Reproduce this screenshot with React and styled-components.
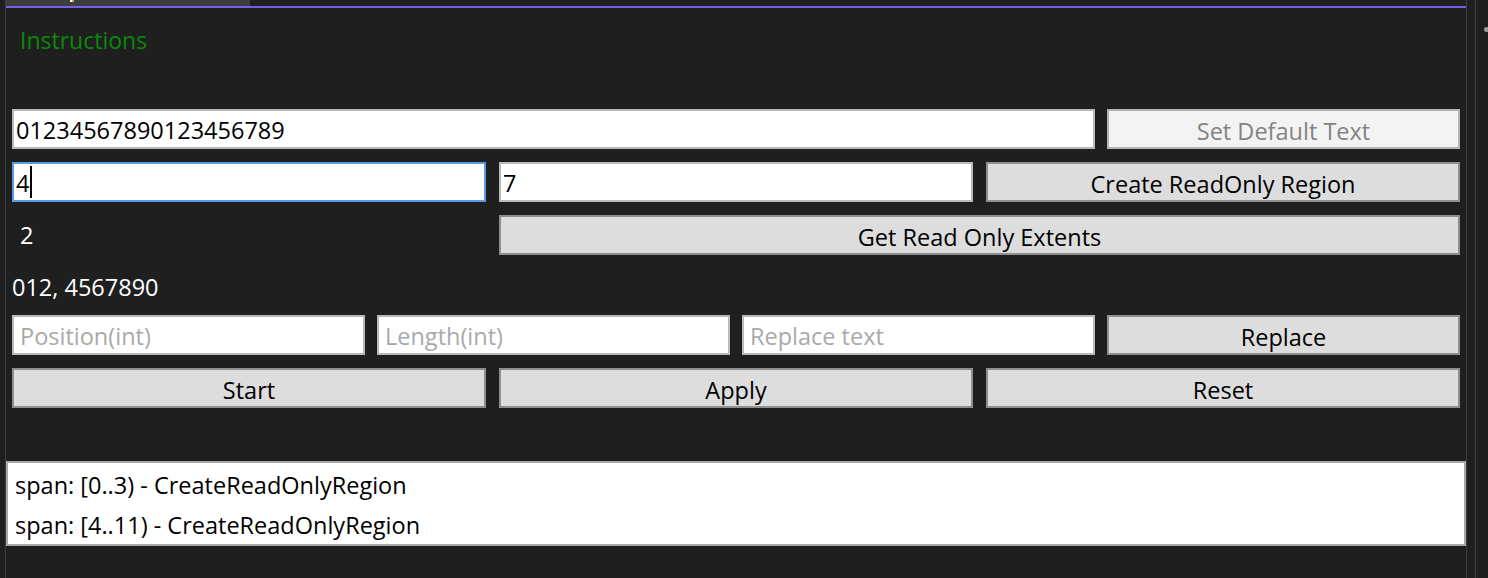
import React from 'react';
import styled, { createGlobalStyle } from 'styled-components';

const GlobalStyle = createGlobalStyle`
  html, body {
    margin: 0;
    padding: 0;
    background: #1f1f1f;
  }
  body {
    font-family: "Open Sans", "Noto Sans", "Liberation Sans", sans-serif;
    font-size: 23.5px;
  }
`;

const Page = styled.div`
  display: flex;
  height: 578px;
  background: #1f1f1f;
  overflow: hidden;
`;

const Gutter = styled.div`
  width: 5px;
  flex: none;
  border-right: 1px solid #3e3e3e;
`;

const Panel = styled.div`
  width: 1460px;
  flex: none;
  display: flex;
  flex-direction: column;
`;

const TabStrip = styled.div`
  height: 6px;
  display: flex;
`;

const Tab = styled.div`
  width: 244px;
  background: #3d3d3d;
  position: relative;
`;

const TabIcon = styled.span`
  position: absolute;
  left: 64px;
  top: 0;
  width: 4px;
  height: 2px;
  background: linear-gradient(90deg, #ffffff 50%, #e8a040 50%);
`;

const Accent = styled.div`
  height: 2px;
  background: #7160e8;
`;

const Heading = styled.div`
  margin: 15px 0 52px 14px;
  line-height: 34px;
  font-size: 23px;
  color: #0a8a0a;
`;

const Form = styled.div`
  display: flex;
  flex-direction: column;
  gap: 13px;
  padding: 0 6px;
`;

const Row = styled.div`
  display: grid;
  grid-template-columns: ${(p) => `repeat(${p.cols}, 1fr)`};
  column-gap: ${(p) => (p.cols === 4 ? '12px' : '13px')};
  height: ${(p) => p.h || 40}px;
`;

const TextBox = styled.div`
  grid-column: ${(p) => p.span || 'auto'};
  box-sizing: border-box;
  height: 40px;
  display: flex;
  align-items: center;
  padding: 2px 2px 0 ${(p) => (p.placeholder ? 6 : 2)}px;
  background: #ffffff;
  border: 2px solid ${(p) => (p.focused ? '#569de5' : '#b9b9b9')};
  color: ${(p) => (p.placeholder ? '#a9a9a9' : '#000000')};
  white-space: nowrap;
  overflow: hidden;
`;

const Caret = styled.span`
  display: inline-block;
  width: 2px;
  height: 32px;
  background: #000;
  margin: -2px 0 0 1px;
`;

const Button = styled.button`
  grid-column: ${(p) => p.span || 'auto'};
  box-sizing: border-box;
  height: 40px;
  margin: 0;
  padding: 3px 0 0;
  font: inherit;
  color: ${(p) => (p.disabled ? '#838383' : '#000000')};
  background: ${(p) => (p.disabled ? '#f3f3f3' : '#dddddd')};
  border: 2px solid ${(p) => (p.disabled ? '#b4b4b4' : '#8f8f8f')};
  border-radius: 0;
`;

const Label = styled.div`
  display: flex;
  align-items: center;
  padding: ${(p) => p.shift || 0}px 0 0 ${(p) => p.indent || 0}px;
  color: #ffffff;
  white-space: nowrap;
`;

const ListBox = styled.div`
  margin-top: 53px;
  height: 85px;
  box-sizing: border-box;
  padding: 2px 0 0 7px;
  background: #ffffff;
  border: 2px solid #a9a9a9;
`;

const ListItem = styled.div`
  height: 40px;
  line-height: 40px;
  color: #000000;
`;

const RightEdge = styled.div`
  flex: 1;
  display: flex;
  border-left: 1px solid #3e3e3e;
`;

const Splitter = styled.div`
  width: 8px;
  border-right: 1px solid #3e3e3e;
`;

const Grip = styled.div`
  flex: 1;
  padding: 27px 0 0 8px;
  &::before {
    content: '';
    display: block;
    width: 5px;
    height: 5px;
    border-radius: 50%;
    background: #9a9a9a;
  }
`;

const App = () => {
  return (
    <>
      <GlobalStyle />
      <Page>
        <Gutter />
        <Panel>
          <TabStrip>
            <Tab>
              <TabIcon />
            </Tab>
          </TabStrip>
          <Accent />
          <Heading>Instructions</Heading>
          <Form>
            <Row cols={4}>
              <TextBox span="1 / 4">01234567890123456789</TextBox>
              <Button disabled>Set Default Text</Button>
            </Row>
            <Row cols={3}>
              <TextBox focused>
                4<Caret />
              </TextBox>
              <TextBox>7</TextBox>
              <Button>Create ReadOnly Region</Button>
            </Row>
            <Row cols={3}>
              <Label indent={8}>2</Label>
              <Button span="2 / 4">Get Read Only Extents</Button>
            </Row>
            <Row cols={3} h={34}>
              <Label shift={3}>012, 4567890</Label>
            </Row>
            <Row cols={4}>
              <TextBox placeholder="true">Position(int)</TextBox>
              <TextBox placeholder="true">Length(int)</TextBox>
              <TextBox placeholder="true">Replace text</TextBox>
              <Button>Replace</Button>
            </Row>
            <Row cols={3}>
              <Button>Start</Button>
              <Button>Apply</Button>
              <Button>Reset</Button>
            </Row>
          </Form>
          <ListBox>
            <ListItem>span: [0..3) - CreateReadOnlyRegion</ListItem>
            <ListItem>span: [4..11) - CreateReadOnlyRegion</ListItem>
          </ListBox>
        </Panel>
        <RightEdge>
          <Splitter />
          <Grip />
        </RightEdge>
      </Page>
    </>
  );
};

export default App;
